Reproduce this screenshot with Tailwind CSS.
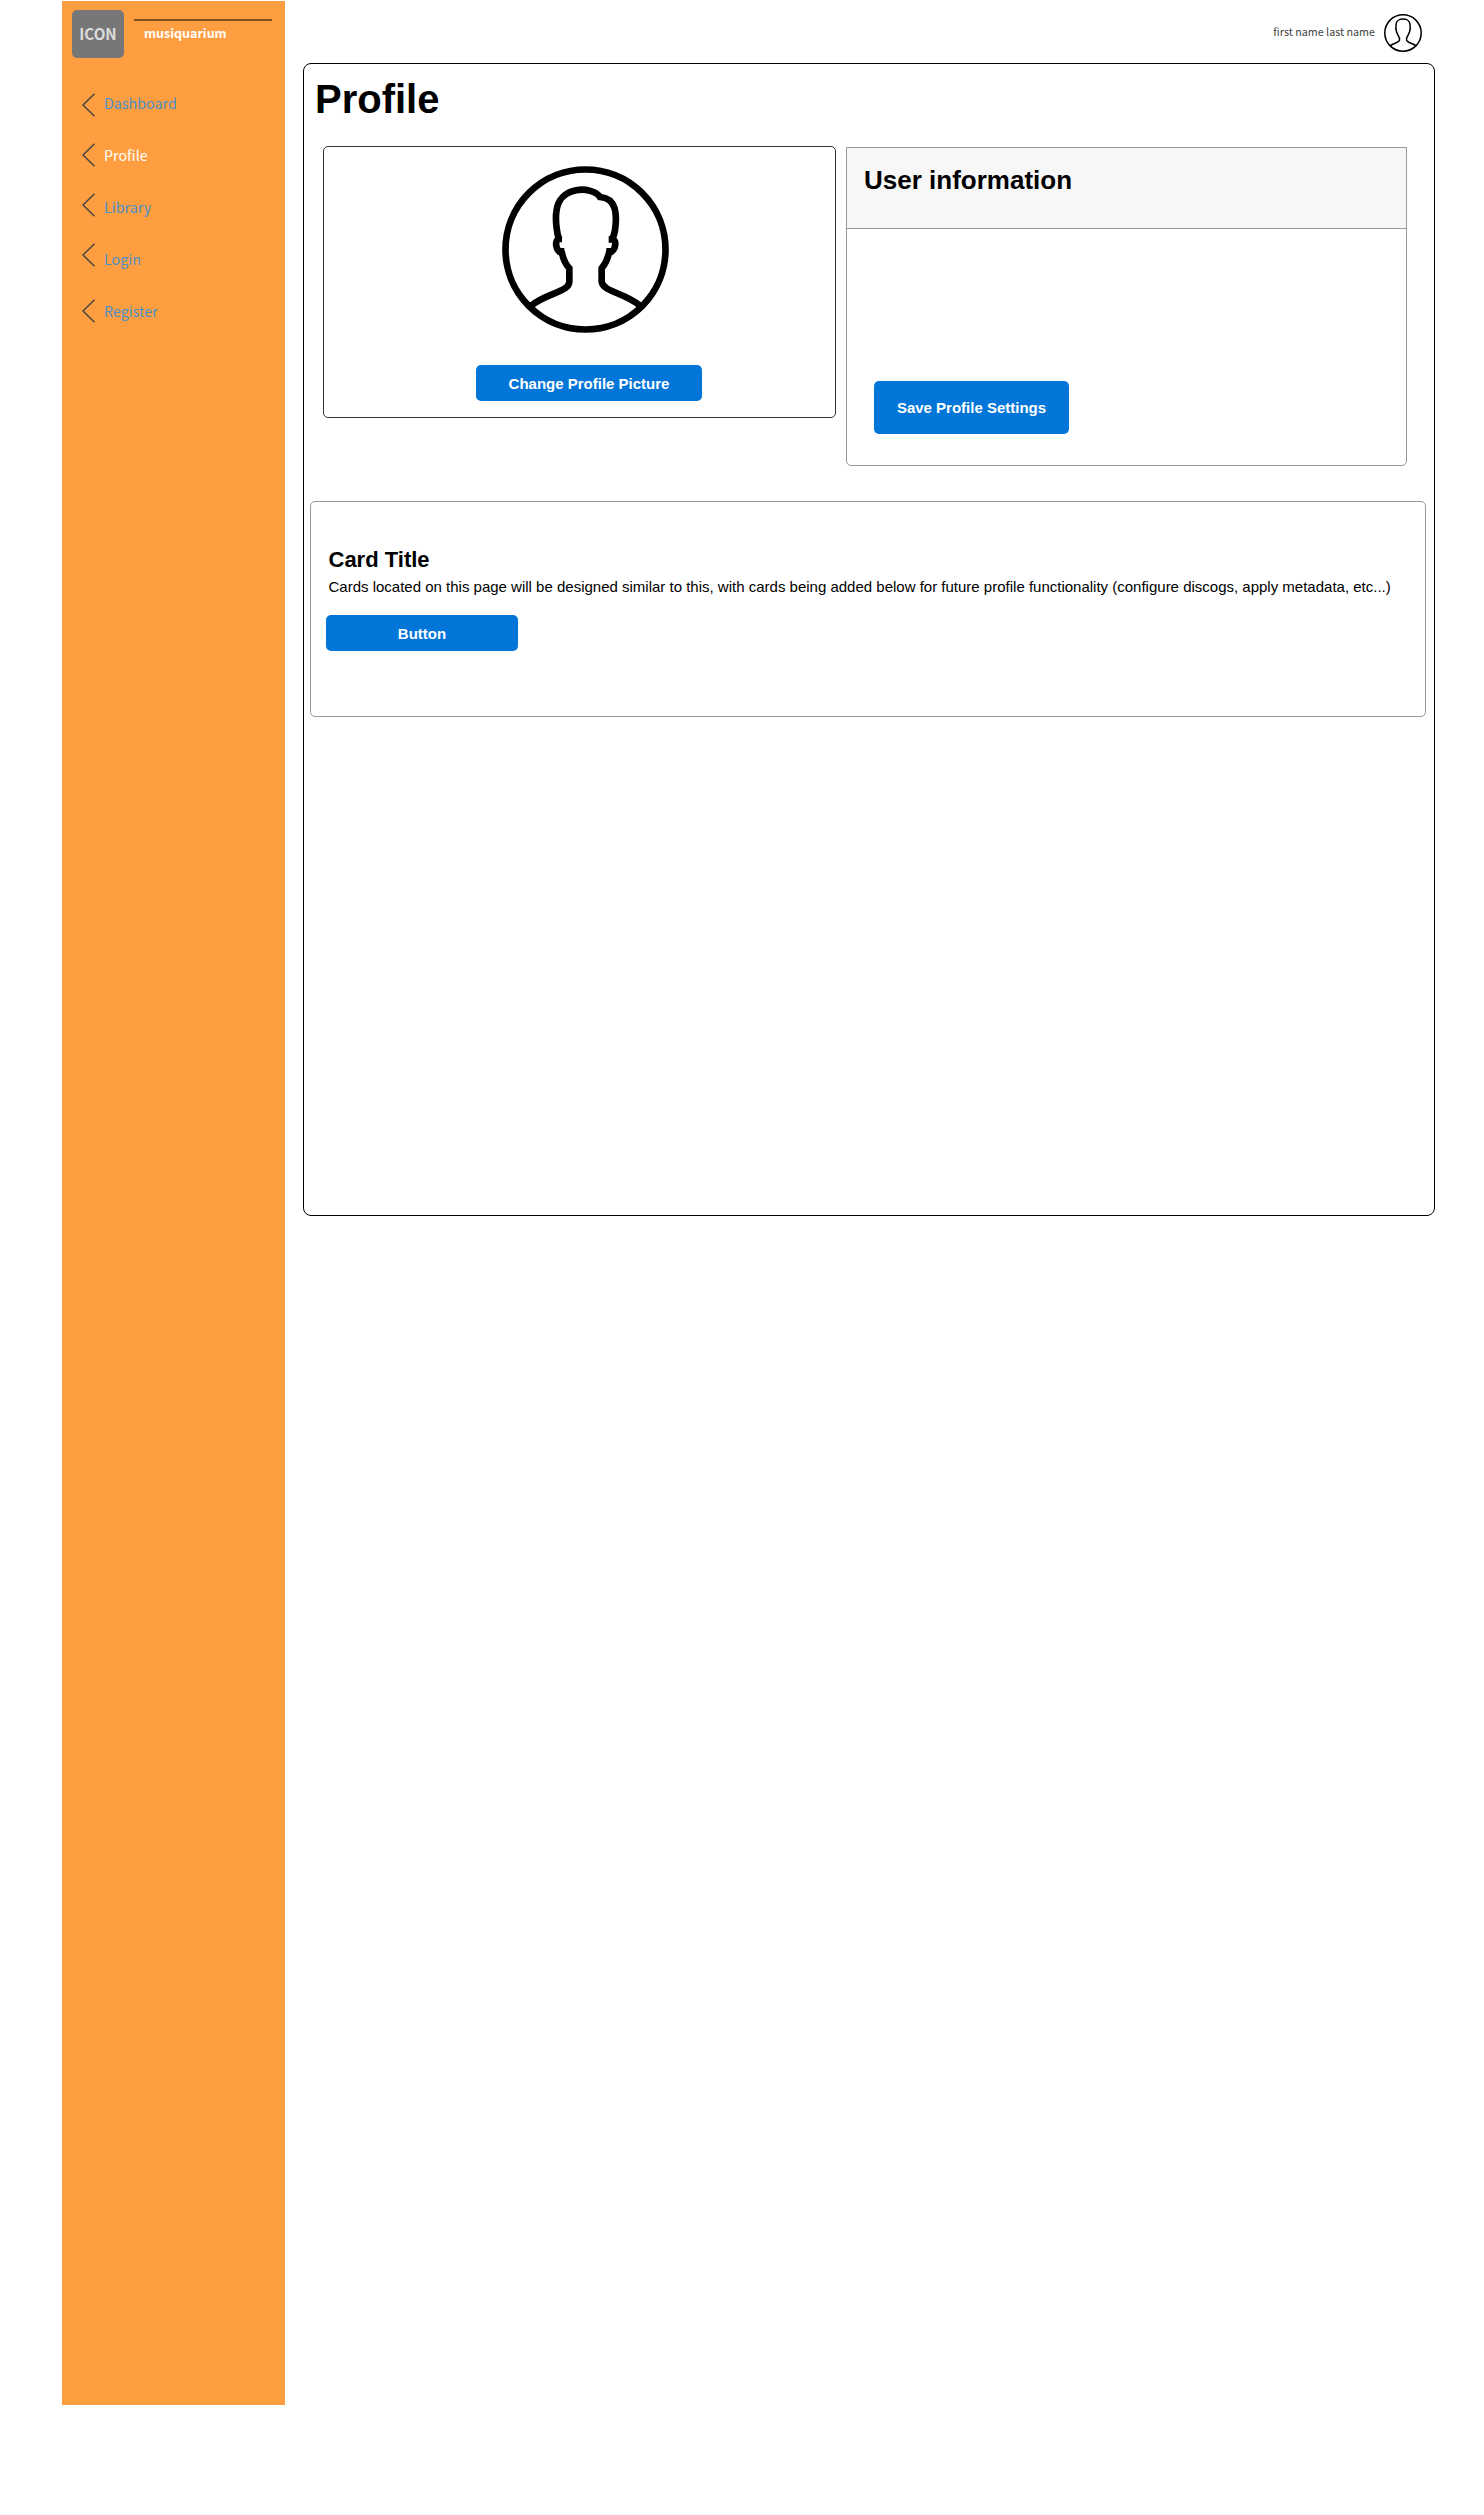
<!DOCTYPE html>
<html lang="en">
<head>
<meta charset="utf-8">
<title>musiquarium - Profile</title>
<script src="https://cdn.jsdelivr.net/npm/@tailwindcss/browser@4"></script>
</head>
<body class="bg-white">
<div class="flex h-[2515px] w-[1484px] items-start overflow-hidden pt-px pl-[62px] font-['Liberation_Sans',sans-serif] text-black">
  <aside class="h-[2404px] w-[223px] shrink-0 bg-[#ff9e40] font-['Noto_Sans_CJK_SC',sans-serif]">
    <div class="flex pt-[9px] pl-[10px]">
      <div class="flex h-12 w-[52px] items-center justify-center rounded-[5px] bg-[#777] text-[15.200px] leading-none font-bold text-[#ddd]">ICON</div>
      <div class="ml-[10px] w-[138px] pt-[9px]">
        <div class="h-0.5 bg-[#80501f]"></div>
        <div class="h-[22px] pt-[3px] pl-[10px] text-[12.500px] leading-[18px] font-bold text-white">musiquarium</div>
      </div>
    </div>
    <nav class="flex flex-col pt-[33px] pl-5 text-[14.300px] leading-6 text-[#4a90c8]">
      <a class="flex h-[52px] gap-[9px]"><svg class="mt-[2px] h-6 w-[13px] shrink-0" viewBox="0 0 13 24" fill="none" stroke="#444" stroke-width="1.5"><path d="M12.5 .8 1 12l11.500 11.200"/></svg><span>Dashboard</span></a>
      <a class="flex h-[52px] gap-[9px]"><svg class="h-6 w-[13px] shrink-0" viewBox="0 0 13 24" fill="none" stroke="#444" stroke-width="1.5"><path d="M12.5 .8 1 12l11.500 11.200"/></svg><span class="text-white">Profile</span></a>
      <a class="flex h-[52px] gap-[9px]"><svg class="-mt-[2px] h-6 w-[13px] shrink-0" viewBox="0 0 13 24" fill="none" stroke="#444" stroke-width="1.5"><path d="M12.5 .8 1 12l11.500 11.200"/></svg><span>Library</span></a>
      <a class="flex h-[52px] gap-[9px]"><svg class="-mt-1 h-6 w-[13px] shrink-0" viewBox="0 0 13 24" fill="none" stroke="#444" stroke-width="1.5"><path d="M12.5 .8 1 12l11.500 11.200"/></svg><span>Login</span></a>
      <a class="flex h-[52px] gap-[9px]"><svg class="h-6 w-[13px] shrink-0" viewBox="0 0 13 24" fill="none" stroke="#444" stroke-width="1.5"><path d="M12.5 .8 1 12l11.500 11.200"/></svg><span>Register</span></a>
    </nav>
  </aside>
  <div class="ml-[18px] w-[1132px]">
    <header class="flex h-[62px] items-start justify-end gap-[9px] pt-[13px] pr-[13px]">
      <span class="mt-1.5 font-['Noto_Sans_CJK_SC',sans-serif] text-[10.750px] leading-6 text-[#444]">first name last name</span>
      <svg class="size-[38px]" viewBox="66 47 501 501" fill="none" stroke="#000" stroke-width="20"><circle cx="316.500" cy="297.500" r="240"/><path d="M150 463C190 430 270 425 270 391V365C255 330 240 310 230 278C218 250 222 210 226 180C234 92 400 92 408 180C412 210 416 250 404 278C394 310 379 330 364 365V391C364 425 445 430 484 463"/></svg>
    </header>
    <main class="h-[1153px] rounded-[8px] border border-black">
      <h1 class="pt-[12px] pl-[11px] text-[40px] leading-[46px] font-bold">Profile</h1>
      <div class="flex items-start pt-6 pl-[19px]">
        <section class="flex h-[272px] w-[513px] flex-col rounded-[5px] border border-[#333]">
          <svg class="mt-[19px] ml-[178px] size-[167px]" viewBox="66 47 501 501" fill="none" stroke="#000" stroke-width="20"><circle cx="316.500" cy="297.500" r="240"/><path d="M152 467C198 428 268 425 268 394V354Q250 334 245 303H253M246 308C226 302 221 264 241 266H246M236 266C229 236 226 208 229 184C237 104 337 107 360 140C409 144 412 190 405 240Q403 253 397 266M386 267H394C412 262 409 302 388 308M379 303H388Q382 334 365 354V394C370 425 430 425 482 467"/></svg>
          <button class="mt-8 ml-[152px] h-9 w-[226px] rounded-[5px] bg-[#0275d8] pt-0.5 text-[15px] font-bold text-white">Change Profile Picture</button>
        </section>
        <section class="mt-px ml-[10px] flex h-[319px] w-[561px] flex-col rounded-b-[5px] border border-[#999]">
          <div class="h-[81px] border-b border-[#999] bg-[#f7f7f7] pt-[17px] pl-[17px] text-[26px] leading-[30px] font-bold">User information</div>
          <button class="mt-[152px] ml-[27px] h-[53px] w-[195px] rounded-[5px] bg-[#0275d8] pt-0.5 text-[15px] font-bold text-white">Save Profile Settings</button>
        </section>
      </div>
      <section class="mt-[35px] ml-[6px] h-[216px] w-[1116px] rounded-[5px] border border-[#999] pt-[45px] pl-[15px]">
        <h2 class="pl-[2.500px] text-[22px] leading-[26px] font-bold">Card Title</h2>
        <p class="pt-[5px] pl-[2.500px] text-[15px] leading-[18px] whitespace-nowrap">Cards located on this page will be designed similar to this, with cards being added below for future profile functionality (configure discogs, apply metadata, etc...)</p>
        <button class="mt-[19px] h-9 w-48 rounded-[5px] bg-[#0275d8] pt-0.5 text-[15px] font-bold text-white">Button</button>
      </section>
    </main>
  </div>
</div>
</body>
</html>
